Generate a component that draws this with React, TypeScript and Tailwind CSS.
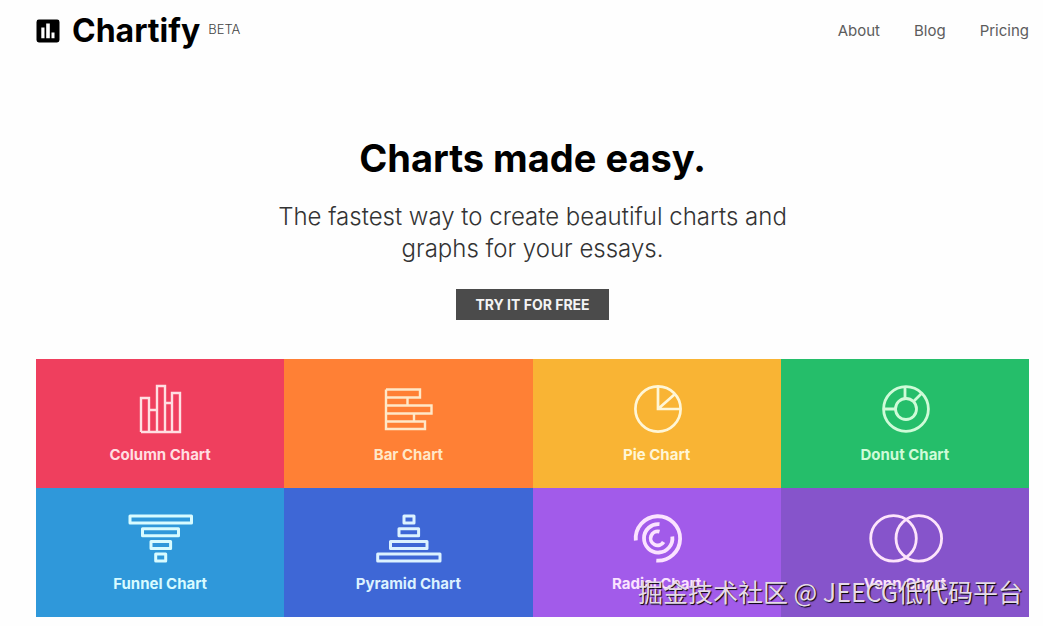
import type { ReactNode } from 'react'

const navLinks = ['About', 'Blog', 'Pricing']

const charts: { name: string; tile: string; ink: string; icon: ReactNode }[] = [
  {
    name: 'Column Chart',
    tile: 'bg-[#ef3f5e]',
    ink: 'text-[#ffdfe2]',
    icon: (
      <path
        strokeWidth="2.4"
        d="M21 49V15h8v34M29 27h8M37 49V3h8v46M45 20h7M52 49V10h8v39zH21z"
      />
    ),
  },
  {
    name: 'Bar Chart',
    tile: 'bg-[#ff8035]',
    ink: 'text-[#ffe8c8]',
    icon: (
      <path
        strokeWidth="2.4"
        d="M18 6.5h34v8H18M39.5 14.5v8M18 22.5h45.5v8H18M46 30.5v8M18 38.5h39V46H18zV6.5z"
      />
    ),
  },
  {
    name: 'Pie Chart',
    tile: 'bg-[#f9b434]',
    ink: 'text-[#fff6d6]',
    icon: (
      <g strokeWidth="2.7">
        <circle cx="41" cy="26" r="22.6" />
        <path d="M41 3.2V26h22.8M41 26l17-15" />
      </g>
    ),
  },
  {
    name: 'Donut Chart',
    tile: 'bg-[#25be6a]',
    ink: 'text-[#cffbd8]',
    icon: (
      <g strokeWidth="2.8">
        <circle cx="41" cy="26" r="22.4" />
        <circle cx="41" cy="26" r="10.5" />
        <path d="M40 3.4v12M18.4 26h12M48.5 18.5l8.5-8.5" />
      </g>
    ),
  },
  {
    name: 'Funnel Chart',
    tile: 'bg-[#2f98da]',
    ink: 'text-[#d8fbff]',
    icon: (
      <g strokeWidth="3" strokeLinejoin="round">
        <rect x="10" y="4" width="61.5" height="7" />
        <rect x="22.5" y="16.8" width="36" height="7" />
        <rect x="31" y="29.5" width="19.6" height="7" />
        <rect x="35.7" y="42" width="10" height="7" />
      </g>
    ),
  },
  {
    name: 'Pyramid Chart',
    tile: 'bg-[#3e67d6]',
    ink: 'text-[#dcf2ff]',
    icon: (
      <g strokeWidth="3" strokeLinejoin="round">
        <rect x="36" y="4" width="10" height="7" />
        <rect x="31" y="16.8" width="19.6" height="7" />
        <rect x="22.5" y="29.5" width="36.5" height="7" />
        <rect x="9.7" y="42" width="62.3" height="7" />
      </g>
    ),
  },
  {
    name: 'Radial Chart',
    tile: 'bg-[#a25bea]',
    ink: 'text-[#fbe3ff]',
    icon: (
      <g strokeWidth="3.8">
        <path d="M18.8 28.5A22.2 22.2 0 1 1 39.3 48.6" />
        <path d="M42.5 12.2A14.2 14.2 0 1 0 55.3 24.5" />
        <path d="M42.5 19.6A7 7 0 1 0 46.6 30" />
      </g>
    ),
  },
  {
    name: 'Venn Chart',
    tile: 'bg-[#8654cb]',
    ink: 'text-[#fde4fb]',
    icon: (
      <g strokeWidth="2.8">
        <circle cx="28.5" cy="26.4" r="22.8" />
        <circle cx="53.8" cy="26.4" r="22.8" />
      </g>
    ),
  },
]

function Header() {
  return (
    <header className="flex h-[62px] items-center justify-between">
      <a href="#home" className="flex items-center">
        <svg viewBox="0 0 24 24" className="mr-3 size-6" aria-hidden="true">
          <rect x="0.5" y="0.5" width="23" height="23" rx="2.4" fill="#000" />
          <path fill="#fff" d="M5.3 8.5h3.2v10.8H5.3zM10.2 4.6h3.6v14.7h-3.6zM15.5 13.6h3v5.7h-3z" />
        </svg>
        <span className="text-[32px] leading-10 font-bold text-black">Chartify</span>
        <span className="mb-1 ml-2 text-[13px] leading-4 font-light text-[#444]">BETA</span>
      </a>
      <nav className="flex gap-[34px] text-[15px] leading-5 text-[#5c5c5c]">
        {navLinks.map((link) => (
          <a key={link} href={`#${link.toLowerCase()}`}>
            {link}
          </a>
        ))}
      </nav>
    </header>
  )
}

function Hero() {
  return (
    <section className="flex flex-col items-center pt-[72px] pb-[39px] text-center">
      <h1 className="text-[38px] leading-12 font-bold text-black">Charts made easy.</h1>
      <p className="mt-[19px] max-w-[560px] text-[24px] leading-8 font-light text-[#333]">
        The fastest way to create beautiful charts and graphs for your essays.
      </p>
      <button className="mt-6 h-[31px] bg-[#4b4b4b] px-[19px] text-[14px] leading-5 font-bold text-[#f4f4f4]">
        TRY IT FOR FREE
      </button>
    </section>
  )
}

export default function App() {
  return (
    <div className="relative min-h-screen bg-[#fefefe] pr-[14px] pl-9 font-['Inter',sans-serif]">
      <Header />
      <Hero />
      <main className="relative grid grid-cols-4">
        {charts.map((chart) => (
          <a
            key={chart.name}
            href="#chart"
            className={`flex h-[129px] flex-col items-center pt-6 ${chart.tile} ${chart.ink}`}
          >
            <svg
              viewBox="0 0 80 52"
              className="h-[52px] w-20"
              fill="none"
              stroke="currentColor"
              aria-hidden="true"
            >
              {chart.icon}
            </svg>
            <span className="mt-2.5 text-[15px] leading-5 font-bold">{chart.name}</span>
          </a>
        ))}
        <p className="pointer-events-none absolute right-1.5 bottom-2.5 text-[25px] leading-8 whitespace-nowrap text-[#e6dbe8] font-['Noto_Sans_CJK_SC',sans-serif] [text-shadow:1px_1px_1px_#000]">
          掘金技术社区 @ JEECG低代码平台
        </p>
      </main>
    </div>
  )
}
